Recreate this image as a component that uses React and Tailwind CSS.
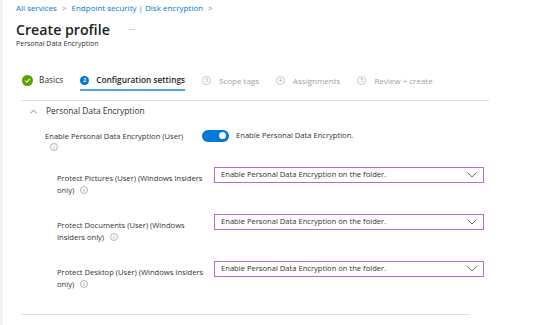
import React from "react";

const font = { fontFamily: '"Segoe UI", "Open Sans", "Noto Sans", sans-serif' };

function Info() {
  return (
    <svg width="8" height="8" viewBox="0 0 10 10" className="inline-block">
      <circle cx="5" cy="5" r="4.4" fill="none" stroke="#8a8886" strokeWidth="0.8" />
      <line x1="5" y1="4.3" x2="5" y2="7.3" stroke="#8a8886" strokeWidth="0.9" />
      <circle cx="5" cy="2.9" r="0.55" fill="#8a8886" />
    </svg>
  );
}

function Chevron() {
  return (
    <svg width="10" height="6" viewBox="0 0 10 6">
      <polyline points="0.5,0.5 5,5 9.5,0.5" fill="none" stroke="#605e5c" strokeWidth="0.9" />
    </svg>
  );
}

function Step({ n, label }) {
  return (
    <div className="flex items-center gap-[8px] text-[#a19f9d]">
      <span className="w-[9px] h-[9px] rounded-full border border-[#c8c6c4] flex items-center justify-center text-[5px] leading-none">
        {n}
      </span>
      <span className="text-[8px]">{label}</span>
    </div>
  );
}

function Row({ label1, label2 }) {
  return (
    <div className="flex items-start h-[47px]">
      <div className="w-[157px] pl-[41px] box-content text-[7.6px] leading-[12px] text-[#323130]">
        <div className="whitespace-nowrap">{label1}</div>
        <div className="flex items-center gap-[6px]">
          <span>{label2}</span>
          <Info />
        </div>
      </div>
      <div className="mt-[-5px] w-[270px] h-[16px] border border-[#b46ccc] flex items-center justify-between pl-[6px] pr-[6px] text-[7.6px] text-[#323130]">
        <span>Enable Personal Data Encryption on the folder.</span>
        <Chevron />
      </div>
    </div>
  );
}

export default function App() {
  return (
    <div className="w-[544px] h-[325px] bg-white flex overflow-hidden" style={font}>
      <div className="w-[3px] bg-[#f3f2f1] shrink-0" />
      <div className="flex-1 pl-[13px]">
        <div className="pt-[1px] text-[8px] text-[#0078d4] flex items-center gap-[5px] h-[15px]">
          <span>All services</span>
          <span className="text-[#8a8886]">&gt;</span>
          <span>Endpoint security | Disk encryption</span>
          <span className="text-[#8a8886]">&gt;</span>
        </div>
        <div className="flex items-center mt-[5px] h-[20px]">
          <span className="text-[14.2px] font-semibold text-[#201f1e] leading-none">Create profile</span>
          <span className="ml-[19px] text-[#605e5c] text-[8px] -mt-[3px]">···</span>
        </div>
        <div className="text-[7px] text-[#323130] -mt-[1px]">Personal Data Encryption</div>

        <div className="ml-[5px] mt-[21px] w-[468px] border-b border-[#e1dfdd]">
          <div className="flex items-center h-[20px] gap-[17px] ml-[1px]">
            <div className="flex items-center gap-[6px]">
              <span className="w-[11px] h-[11px] rounded-full bg-[#57a300] flex items-center justify-center">
                <svg width="7" height="7" viewBox="0 0 8 8">
                  <polyline points="1.5,4.2 3.3,6 6.6,2.2" fill="none" stroke="white" strokeWidth="1.3" />
                </svg>
              </span>
              <span className="text-[8.4px] text-[#323130]">Basics</span>
            </div>
            <div className="relative flex items-center gap-[7px] h-full">
              <span className="w-[9px] h-[9px] rounded-full bg-[#0078d4] text-white flex items-center justify-center text-[5px] font-bold leading-none">
                2
              </span>
              <span className="text-[8.3px] text-[#201f1e] font-semibold">Configuration settings</span>
              <span className="absolute left-0 right-0 bottom-[0px] h-[2px] bg-[#4ea3e8]" />
            </div>
            <Step n="3" label="Scope tags" />
            <Step n="4" label="Assignments" />
            <Step n="5" label="Review + create" />
          </div>
          <div className="h-[9px]" />
        </div>

        <div className="ml-[14px] mt-[5px] flex items-center gap-[9px] h-[12px] text-[8.4px] text-[#323130]">
          <svg width="7" height="5" viewBox="0 0 8 5">
            <polyline points="0.5,4.5 4,1 7.5,4.5" fill="none" stroke="#605e5c" strokeWidth="0.9" />
          </svg>
          <span>Personal Data Encryption</span>
        </div>

        <div className="flex items-start mt-[13px] h-[34px]">
          <div className="w-[157px] pl-[29px] box-content text-[7.6px] leading-[11px] text-[#323130]">
            <div className="whitespace-nowrap">Enable Personal Data Encryption (User)</div>
            <div className="pl-[5px] mt-[0px]"><Info /></div>
          </div>
          <div className="flex items-center gap-[7px] -mt-[1px]">
            <span className="w-[27px] h-[12px] rounded-full bg-[#0078d4] flex items-center justify-end pr-[3px]">
              <span className="w-[7px] h-[7px] rounded-full bg-white" />
            </span>
            <span className="text-[7.6px] text-[#323130]">Enable Personal Data Encryption.</span>
          </div>
        </div>

        <div className="mt-[7px]">
          <Row label1="Protect Pictures (User) (Windows Insiders" label2="only)" />
          <Row label1="Protect Documents (User) (Windows" label2="Insiders only)" />
          <Row label1="Protect Desktop (User) (Windows Insiders" label2="only)" />
        </div>

        <div className="ml-[5px] mt-[1px] w-[449px] border-b border-[#e1dfdd]" />
      </div>
    </div>
  );
}
